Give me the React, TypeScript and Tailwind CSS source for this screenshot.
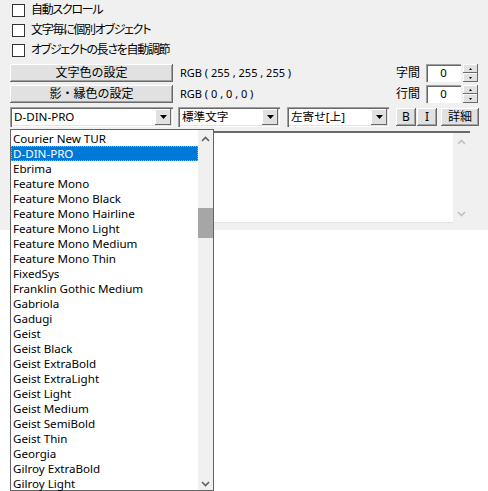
import React from "react";

const fonts = [
  "Courier New TUR",
  "D-DIN-PRO",
  "Ebrima",
  "Feature Mono",
  "Feature Mono Black",
  "Feature Mono Hairline",
  "Feature Mono Light",
  "Feature Mono Medium",
  "Feature Mono Thin",
  "FixedSys",
  "Franklin Gothic Medium",
  "Gabriola",
  "Gadugi",
  "Geist",
  "Geist Black",
  "Geist ExtraBold",
  "Geist ExtraLight",
  "Geist Light",
  "Geist Medium",
  "Geist SemiBold",
  "Geist Thin",
  "Georgia",
  "Gilroy ExtraBold",
  "Gilroy Light",
];

const ui = "font-['Noto_Sans','Noto_Sans_CJK_JP',sans-serif]";

function Check({ label }: { label: string }) {
  return (
    <div className="flex h-5 items-center">
      <span className="ml-3 h-[13px] w-[13px] border border-[#333] bg-white" />
      <span className="ml-[6px] text-[12px] tracking-[-1.3px] text-black [font-feature-settings:'palt']">{label}</span>
    </div>
  );
}

function RaisedButton({ children, className }: { children: React.ReactNode; className?: string }) {
  return (
    <div
      className={
        "flex items-center justify-center bg-[#e1e1e1] text-[12px] text-black shadow-[inset_-1px_-1px_#696969,inset_1px_1px_#fff,inset_-2px_-2px_#a0a0a0] " +
        (className ?? "")
      }
    >
      {children}
    </div>
  );
}

function Arrow() {
  return (
    <svg width="7" height="4" viewBox="0 0 7 4">
      <path d="M0 0h7L3.5 4z" fill="#000" />
    </svg>
  );
}

function Combo({ value, className }: { value: string; className?: string }) {
  return (
    <div
      className={
        "flex h-[20px] items-stretch bg-white p-[2px] shadow-[inset_1px_1px_#a0a0a0,inset_2px_2px_#696969,inset_-1px_-1px_#fff,inset_-2px_-2px_#e3e3e3] " +
        (className ?? "")
      }
    >
      <span className="flex-1 pl-[2px] text-[11.6px] leading-[16px] text-black">{value}</span>
      <span className="flex w-[16px] items-center justify-center bg-[#e1e1e1] shadow-[inset_-1px_-1px_#696969,inset_1px_1px_#fff]">
        <Arrow />
      </span>
    </div>
  );
}

function Spin({ label }: { label: string }) {
  return (
    <div className="flex h-[18px] items-center">
      <span className="mr-[6px] text-[12px]">{label}</span>
      <span className="flex h-[18px] w-[35px] items-center justify-center bg-white text-[11.4px] shadow-[inset_1px_1px_#a0a0a0,inset_2px_2px_#696969,inset_-1px_-1px_#fff]">
        0
      </span>
      <span className="ml-[2px] flex h-[18px] w-[15px] flex-col">
        <span className="flex flex-1 items-center justify-center bg-[#e1e1e1] shadow-[inset_-1px_-1px_#696969,inset_1px_1px_#fff]">
          <svg width="3" height="2" viewBox="0 0 3 2"><path d="M1.5 0L3 2H0z" fill="#000" /></svg>
        </span>
        <span className="flex flex-1 items-center justify-center bg-[#e1e1e1] shadow-[inset_-1px_-1px_#696969,inset_1px_1px_#fff]">
          <svg width="3" height="2" viewBox="0 0 3 2"><path d="M0 0h3L1.5 2z" fill="#000" /></svg>
        </span>
      </span>
    </div>
  );
}

function Chevron({ up, color }: { up?: boolean; color: string }) {
  return (
    <svg width="9" height="6" viewBox="0 0 9 6">
      <path d={up ? "M1 5L4.5 1.5L8 5" : "M1 1L4.5 4.5L8 1"} stroke={color} strokeWidth="1.6" fill="none" />
    </svg>
  );
}

export default function App() {
  return (
    <div className={"relative h-[491px] w-[488px] overflow-hidden bg-white " + ui}>
      <div className="h-[230px] bg-[#f0f0f0]">
        <Check label="自動スクロール" />
        <Check label="文字毎に個別オブジェクト" />
        <Check label="オブジェクトの長さを自動調節" />

        <div className="mt-[4px] flex">
          <div className="ml-[10px] flex w-[163px] flex-col gap-[3px]">
            <RaisedButton className="h-[18px]">文字色の設定</RaisedButton>
            <RaisedButton className="h-[18px]">影・縁色の設定</RaisedButton>
          </div>
          <div className="ml-[7px] flex flex-col gap-[3px] text-[11px]">
            <span className="flex h-[18px] items-center">RGB ( 255 , 255 , 255 )</span>
            <span className="flex h-[18px] items-center">RGB ( 0 , 0 , 0 )</span>
          </div>
          <div className="ml-auto mr-[10px] flex flex-col gap-[3px]">
            <Spin label="字間" />
            <Spin label="行間" />
          </div>
        </div>

        <div className="mt-[4px] flex items-center">
          <Combo value="D-DIN-PRO" className="ml-[10px] w-[163px]" />
          <Combo value="標準文字" className="ml-[5px] w-[102px]" />
          <Combo value="左寄せ[上]" className="ml-[7px] w-[102px]" />
          <RaisedButton className="ml-[7px] h-[18px] w-[20px] text-[11.4px]">B</RaisedButton>
          <RaisedButton className="ml-[1px] h-[18px] w-[20px] text-[11.4px]">I</RaisedButton>
          <RaisedButton className="ml-[4px] h-[18px] w-[38px]">詳細</RaisedButton>
        </div>

        <div className="ml-[196px] mt-[4px] flex h-[92px] w-[274px] border-t-2 border-[#696969] bg-white shadow-[inset_-1px_-1px_#e3e3e3]">
          <div className="flex-1" />
          <div className="flex w-[17px] flex-col items-center justify-between bg-[#f0f0f0] py-[6px]">
            <Chevron up color="#c0c0c0" />
            <Chevron color="#c0c0c0" />
          </div>
        </div>
      </div>

      {/* open font list of the first combo */}
      <div className="absolute left-[10px] top-[129px] flex h-[362px] w-[204px] border border-[#646464] bg-white">
        <ul className="flex-1 pt-[1px]">
          {fonts.map((f) => (
            <li
              key={f}
              className={
                "h-[15px] overflow-hidden pl-[2px] text-[11.6px] leading-[15px] " +
                (f === "D-DIN-PRO"
                  ? "bg-[#0078d7] text-white outline outline-1 -outline-offset-1 outline-dotted outline-[#f0a030]"
                  : "text-black")
              }
            >
              {f}
            </li>
          ))}
        </ul>
        <div className="relative flex w-[15px] flex-col items-center bg-[#f0f0f0]">
          <div className="mt-[6px]">
            <Chevron up color="#606060" />
          </div>
          <div className="absolute left-0 top-[78px] h-[30px] w-[15px] bg-[#a6a6a6]" />
          <div className="absolute bottom-[3px]">
            <Chevron color="#606060" />
          </div>
        </div>
      </div>
    </div>
  );
}
